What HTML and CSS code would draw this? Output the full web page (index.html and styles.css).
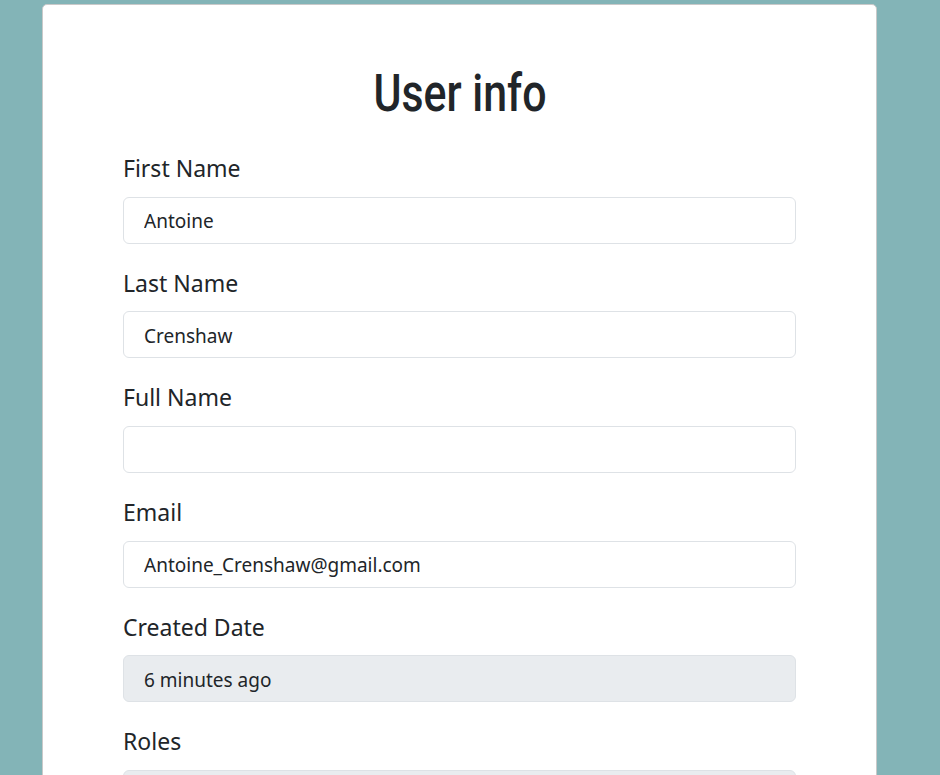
FILE: index.html
```html
<!DOCTYPE html>
<html lang="en">
<head>
<meta charset="utf-8">
<title>User info</title>
<link rel="stylesheet" href="styles.css">
</head>
<body>
<main class="card">
  <h1 class="title"><span class="title-text">User info</span></h1>
  <form class="form">
    <div class="group">
      <label class="label" for="first">First Name</label>
      <input class="control" id="first" type="text" value="Antoine">
    </div>
    <div class="group">
      <label class="label" for="last">Last Name</label>
      <input class="control" id="last" type="text" value="Crenshaw">
    </div>
    <div class="group">
      <label class="label" for="full">Full Name</label>
      <input class="control" id="full" type="text" value="">
    </div>
    <div class="group">
      <label class="label" for="email">Email</label>
      <input class="control" id="email" type="text" value="Antoine_Crenshaw@gmail.com">
    </div>
    <div class="group">
      <label class="label" for="created">Created Date</label>
      <input class="control readonly" id="created" type="text" value="6 minutes ago" readonly>
    </div>
    <div class="group">
      <label class="label" for="roles">Roles</label>
      <input class="control readonly" id="roles" type="text" value="" readonly>
    </div>
  </form>
</main>
</body>
</html>
```
FILE: styles.css
```css
html, body {
  margin: 0;
  padding: 0;
}
body {
  background: #83b4b7;
  font-family: "Noto Sans", "Open Sans", sans-serif;
  color: #212529;
  height: 775px;
  overflow: hidden;
}
.card {
  margin: 4px 0 0 42px;
  width: 835px;
  box-sizing: border-box;
  background: #fff;
  border: 1px solid #c9c9c9;
  border-radius: 5px;
  padding: 58px 80px 40px;
  min-height: 900px;
}
.title {
  margin: 0 0 31px;
  text-align: center;
  font-family: Roboto, sans-serif;
  font-weight: 500;
  font-size: 51px;
  line-height: 61.2px;
  color: #212529;
}
.title-text {
  display: inline-block;
  transform: scaleX(0.84);
}
.form {
  display: flex;
  flex-direction: column;
  gap: 26px;
}
.group {
  display: flex;
  flex-direction: column;
  gap: 14px;
}
.label {
  font-size: 23px;
  line-height: 27.6px;
}
.control {
  box-sizing: border-box;
  width: 100%;
  height: 47px;
  padding: 2px 20px 0;
  border: 1px solid #dee2e6;
  border-radius: 6px;
  font-family: inherit;
  font-size: 19px;
  color: #212529;
  background: #fff;
  outline: none;
}
.control.readonly {
  background: #e9ecef;
}
```
